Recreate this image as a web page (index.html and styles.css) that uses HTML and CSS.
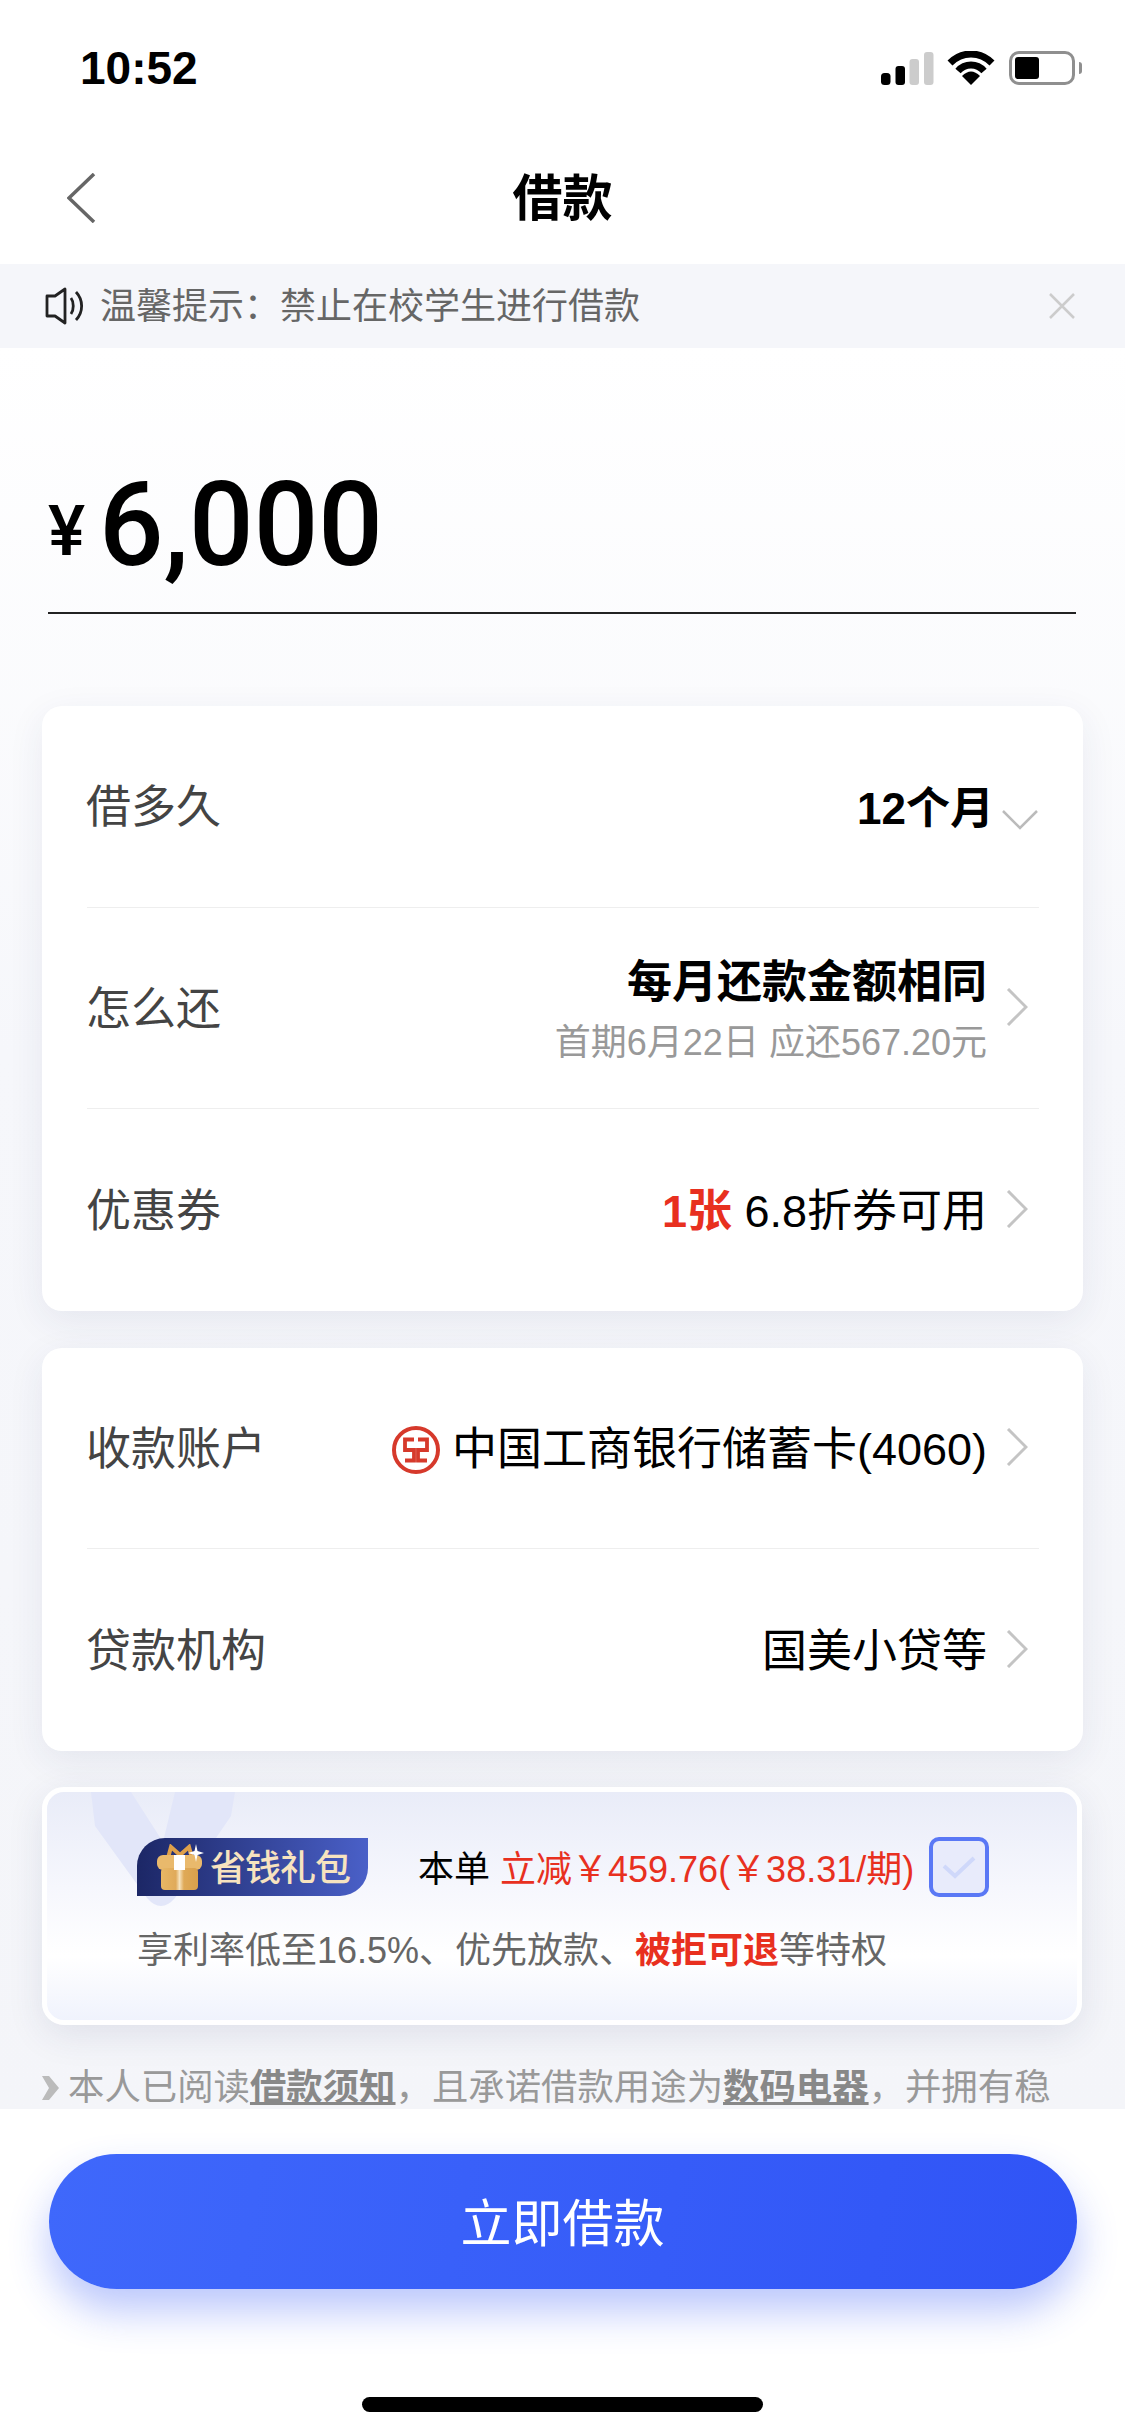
FILE: index.html
```html
<!DOCTYPE html>
<html lang="zh-CN">
<head>
	<meta charset="UTF-8">
	<title>借款</title>
	<link rel="stylesheet" href="styles.css">
</head>
<body>
	<div class="page">
		<div class="status">
			<span class="time">10:52</span>
			<div class="status-icons">
				<svg class="signal" width="54" height="33" viewBox="0 0 54 33">
					<rect x="0" y="21" width="9.5" height="12" rx="3.5" fill="#000"/>
					<rect x="14.5" y="14" width="9.5" height="19" rx="3" fill="#000"/>
					<rect x="28.5" y="7" width="9.5" height="26" rx="3" fill="#ccc"/>
					<rect x="43" y="0" width="9.5" height="33" rx="3" fill="#ccc"/>
				</svg>
				<svg class="wifi" width="48" height="34" viewBox="0 0 48 34">
					<path d="M3 12 C15 0 33 0 45 12" fill="none" stroke="#000" stroke-width="7"/>
					<path d="M11 20 C18 12 30 12 37 20" fill="none" stroke="#000" stroke-width="7"/>
					<path d="M15 25 C21 19 27 19 33 25 L24 34 Z" fill="#000"/>
				</svg>
				<div class="battery"><div class="battery-fill"></div></div>
				<div class="battery-nub"></div>
			</div>
		</div>
		<div class="nav">
			<svg class="back" width="29" height="50" viewBox="0 0 29 50"><path d="M27 1 L2 25 L27 49" fill="none" stroke="#666" stroke-width="3.5"/></svg>
			<h1 class="title">借款</h1>
		</div>
		<div class="notice">
			<svg class="speaker" width="40" height="38" viewBox="0 0 40 38" fill="none" stroke="#222" stroke-width="2.8">
				<path d="M2 9 H10 L20 2 V36 L10 29 H2 Z" stroke-linejoin="round"/>
				<path d="M26 11 C29 15 29 23 26 27"/>
				<path d="M31 5 C38.500 13 38.500 25 31 33"/>
			</svg>
			<span class="notice-text">温馨提示：禁止在校学生进行借款</span>
			<svg class="notice-close" width="28" height="28" viewBox="0 0 28 28"><path d="M2 2 L26 26 M26 2 L2 26" stroke="#ccc" stroke-width="2.5"/></svg>
		</div>

		<div class="content">
			<div class="amount">
				<span class="amount-unit">¥</span>
				<span class="amount-num">6,000</span>
			</div>

			<div class="card">
				<div class="row">
					<span class="row-label">借多久</span>
					<span class="row-value strong term">12个月</span>
					<svg class="arrow-down" width="36" height="20" viewBox="0 0 36 20"><path d="M1 1 L18 18 L35 1" fill="none" stroke="#bbb" stroke-width="2.5"/></svg>
				</div>
				<div class="row">
					<span class="row-label">怎么还</span>
					<div class="row-stack">
						<span class="row-value strong">每月还款金额相同</span>
						<span class="row-sub">首期6月22日 应还567.20元</span>
					</div>
					<svg class="arrow" width="22" height="38" viewBox="0 0 22 38"><path d="M2 1 L20 19 L2 37" fill="none" stroke="#c4c4c4" stroke-width="3"/></svg>
				</div>
				<div class="row">
					<span class="row-label">优惠券</span>
					<span class="row-value"><b class="red">1张</b> 6.8折券可用</span>
					<svg class="arrow" width="22" height="38" viewBox="0 0 22 38"><path d="M2 1 L20 19 L2 37" fill="none" stroke="#c4c4c4" stroke-width="3"/></svg>
				</div>
			</div>

			<div class="card card-account">
				<div class="row">
					<span class="row-label">收款账户</span>
					<svg class="bank-logo" width="48" height="48" viewBox="0 0 48 48" fill="none" stroke="#d6392b">
						<circle cx="24" cy="24" r="22" stroke-width="4"/>
						<path d="M22 13.500 H13 V24 H22 V34.500 H13 M26 13.500 H35 V24 H26 V34.500 H35" stroke-width="3.800"/>
					</svg>
					<span class="row-value">中国工商银行储蓄卡(4060)</span>
					<svg class="arrow" width="22" height="38" viewBox="0 0 22 38"><path d="M2 1 L20 19 L2 37" fill="none" stroke="#c4c4c4" stroke-width="3"/></svg>
				</div>
				<div class="row">
					<span class="row-label">贷款机构</span>
					<span class="row-value">国美小贷等</span>
					<svg class="arrow" width="22" height="38" viewBox="0 0 22 38"><path d="M2 1 L20 19 L2 37" fill="none" stroke="#c4c4c4" stroke-width="3"/></svg>
				</div>
			</div>

			<div class="gift-card">
				<svg class="gift-mark" width="144" height="116" viewBox="0 0 144 116"><path d="M0 0 H40 L72 50 L84 0 H144 L140 24 L84 106 Q70 122 56 106 L4 34 Z" fill="#e2e6f9"/></svg>
				<div class="gift-top">
					<div class="gift-badge">
						<svg width="50" height="46" viewBox="0 0 50 46">
							<defs>
								<linearGradient id="box" x1="0" x2="1" y1="0" y2="0">
									<stop offset="0" stop-color="#e8b765"/>
									<stop offset=".4" stop-color="#e0aa5a"/>
									<stop offset=".5" stop-color="#f6e2bd"/>
									<stop offset=".62" stop-color="#dfa957"/>
									<stop offset="1" stop-color="#d9a04c"/>
								</linearGradient>
							</defs>
							<path d="M11 14 L14 3 L23 11 L32 3 L35 14" fill="none" stroke="#dfa04a" stroke-width="4"/>
							<rect x="0" y="11" width="45" height="15" rx="6" fill="#e9b96c"/>
							<rect x="4" y="24" width="37" height="22" rx="4" fill="url(#box)"/>
							<rect x="17" y="11" width="11" height="15" fill="#fff"/>
							<path d="M39 0 L40.5 7 L47 9 L40.5 11 L39 18 L37.5 11 L31 9 L37.5 7 Z" fill="#fff"/>
						</svg>
						<span>省钱礼包</span>
					</div>
					<span class="gift-price">本单 <span class="red">立减￥459.76(￥38.31/期)</span></span>
					<div class="gift-check">
						<svg width="34" height="24" viewBox="0 0 34 24"><path d="M2 11 L13 21 L32 3" fill="none" stroke="#cfd8fa" stroke-width="4"/></svg>
					</div>
				</div>
				<p class="gift-desc">享利率低至16.5%、优先放款、<b class="red">被拒可退</b>等特权</p>
			</div>

			<p class="agree">
				<svg class="agree-mark" width="17" height="24" viewBox="0 0 17 24"><path d="M0 0 H7 L17 12 L7 24 H0 L7 12 Z" fill="#bbb"/></svg>本人已阅读<b class="agree-link">借款须知</b>，且承诺借款用途为<b class="agree-link">数码电器</b>，并拥有稳
			</p>
		</div>

		<div class="footer">
			<button class="submit">立即借款</button>
			<div class="home-bar"></div>
		</div>
	</div>
</body>
</html>
```

FILE: styles.css
```css
html,
body {
	margin: 0;
	padding: 0;
	background: #fff;
}
body {
	font-family: "Liberation Sans", "Noto Sans CJK SC", sans-serif;
}
.page {
	display: flex;
	flex-direction: column;
	width: 1125px;
	height: 2436px;
	overflow: hidden;
}
.red {
	color: #e8301f;
}

/* status bar */
.status {
	display: flex;
	flex: none;
	align-items: center;
	justify-content: space-between;
	box-sizing: border-box;
	height: 136px;
	padding: 0 43px 0 80px;
}
.time {
	font-size: 46px;
	font-weight: bold;
	line-height: 50px;
	color: #000;
}
.status-icons {
	display: flex;
	align-items: center;
}
.signal {
	margin-right: 12px;
}
.wifi {
	margin-right: 14px;
}
.battery {
	box-sizing: border-box;
	width: 66px;
	height: 34px;
	padding: 3px;
	border: 3px solid #8f8f8f;
	border-radius: 10px;
}
.battery-fill {
	width: 24px;
	height: 100%;
	background: #000;
	border-radius: 3px;
}
.battery-nub {
	width: 3px;
	height: 12px;
	margin-left: 4px;
	background: #8f8f8f;
	border-radius: 0 3px 3px 0;
}

/* nav */
.nav {
	position: relative;
	display: flex;
	flex: none;
	align-items: center;
	justify-content: center;
	box-sizing: border-box;
	height: 128px;
	padding-bottom: 3px;
}
.back {
	position: absolute;
	left: 67px;
	top: 37px;
}
.title {
	margin: 0;
	font-size: 50px;
	font-weight: bold;
	line-height: 60px;
	color: #000;
}

/* notice */
.notice {
	display: flex;
	flex: none;
	align-items: center;
	box-sizing: border-box;
	height: 84px;
	padding: 0 49px 0 45px;
	background: #f5f6fa;
}
.speaker {
	margin-right: 15px;
}
.notice-text {
	flex: 1;
	padding-top: 2px;
	font-size: 36px;
	line-height: 44px;
	color: #666;
}

/* scroll area */
.content {
	flex: 1;
	min-height: 0;
	background: linear-gradient(#fff 0%, #f6f7fb 40%, #f4f5f9 100%);
}
.amount {
	display: flex;
	align-items: flex-end;
	height: 116px;
	margin: 0 49px 92px 48px;
	padding: 119px 0 29px;
	border-bottom: 2.5px solid #222;
}
.amount-unit {
	margin-right: 14px;
	margin-bottom: 17px;
	font-family: Roboto, sans-serif;
	font-size: 70px;
	font-weight: 500;
	line-height: 70px;
	color: #000;
}
.amount-num {
	font-family: Roboto, sans-serif;
	font-size: 116px;
	font-weight: 500;
	line-height: 116px;
	color: #000;
	transform: scaleX(.98);
	transform-origin: left;
}

/* cards */
.card {
	margin: 0 42px;
	padding: 0 44px 0 45px;
	background: #fff;
	border-radius: 20px;
	box-shadow: 0 10px 36px rgba(40, 50, 100, .08);
}
.card-account {
	margin-top: 37px;
}
.row {
	display: flex;
	align-items: center;
	box-sizing: border-box;
	height: 201.5px;
	padding-top: 4px;
	border-bottom: 1.5px solid #eee;
}
.row:last-child {
	border-bottom: 0;
}
.row-label {
	flex: 1;
	margin-left: -1px;
	font-size: 45px;
	line-height: 56px;
	color: #444;
}
.row-value {
	font-size: 45px;
	line-height: 56px;
	color: #000;
	white-space: nowrap;
}
.row-value b {
	font-weight: bold;
}
.strong {
	font-weight: bold;
}
.term {
	margin-top: 2px;
	margin-right: 8px;
	font-size: 44px;
}
.row-stack {
	display: flex;
	flex-direction: column;
	align-items: flex-end;
	margin-top: 4px;
}
.row-sub {
	margin-top: 7px;
	font-size: 36px;
	line-height: 50px;
	color: #999;
	white-space: nowrap;
}
.arrow {
	margin-left: 19px;
	margin-right: 11px;
	margin-bottom: 5px;
}
.arrow-down {
	margin-top: 24px;
	margin-right: 1px;
}
.bank-logo {
	margin-right: 12px;
}

/* gift */
.gift-card {
	position: relative;
	box-sizing: border-box;
	height: 238px;
	margin: 36px 43px 0 42px;
	padding: 46px 0 0 90px;
	overflow: hidden;
	border: 5px solid #fff;
	border-radius: 22px;
	background: linear-gradient(#e9ecf8 0%, #f6f7fd 42%, #fff 72%, #f0f3fd 100%);
	box-shadow: 0 10px 36px rgba(40, 50, 100, .1);
}
.gift-mark {
	position: absolute;
	left: 44px;
	top: 0;
}
.gift-top {
	position: relative;
	display: flex;
	align-items: center;
	height: 58px;
}
.gift-badge {
	display: flex;
	align-items: center;
	box-sizing: border-box;
	width: 231px;
	height: 58px;
	padding: 0 0 4px 20px;
	font-size: 36px;
	font-weight: 500;
	letter-spacing: -1px;
	color: #f7e3bf;
	background: linear-gradient(90deg, #1c2766 0%, #4a60c8 100%);
	border-radius: 28px 0 28px 0;
}
.gift-badge svg {
	margin-top: 4px;
	margin-right: 3px;
}
.gift-price {
	margin-top: 6px;
	margin-left: 50px;
	font-size: 36px;
	line-height: 44px;
	color: #000;
	white-space: nowrap;
}
.gift-check {
	display: flex;
	align-items: center;
	justify-content: center;
	box-sizing: border-box;
	width: 60px;
	height: 60px;
	margin-left: 15px;
	background: #e8ebfb;
	border: 4px solid #5a78f5;
	border-radius: 10px;
}
.gift-desc {
	position: relative;
	margin: 33px 0 0;
	font-size: 36px;
	line-height: 44px;
	color: #666;
	white-space: nowrap;
}

/* agreement */
.agree {
	margin: 48px 42px 0;
	font-size: 36.4px;
	line-height: 30px;
	color: #999;
	white-space: nowrap;
}
.agree-mark {
	margin-right: 9px;
}
.agree-link {
	color: #888;
	text-decoration: underline;
	text-decoration-thickness: 3px;
	text-underline-offset: 2px;
}

/* footer */
.footer {
	position: relative;
	display: flex;
	flex: none;
	flex-direction: column;
	align-items: center;
	box-sizing: border-box;
	height: 327px;
	padding-top: 45px;
	background: #fff;
}
.submit {
	width: 1028px;
	height: 135px;
	padding: 0 0 4px;
	font-family: inherit;
	font-size: 51px;
	color: #fff;
	background: linear-gradient(100deg, #3f68fb 0%, #3054f6 100%);
	border: 0;
	border-radius: 68px;
	box-shadow: 0 22px 40px rgba(45, 80, 245, .32);
}
.home-bar {
	width: 401px;
	height: 15px;
	margin-top: 108px;
	background: #000;
	border-radius: 8px;
}
```
